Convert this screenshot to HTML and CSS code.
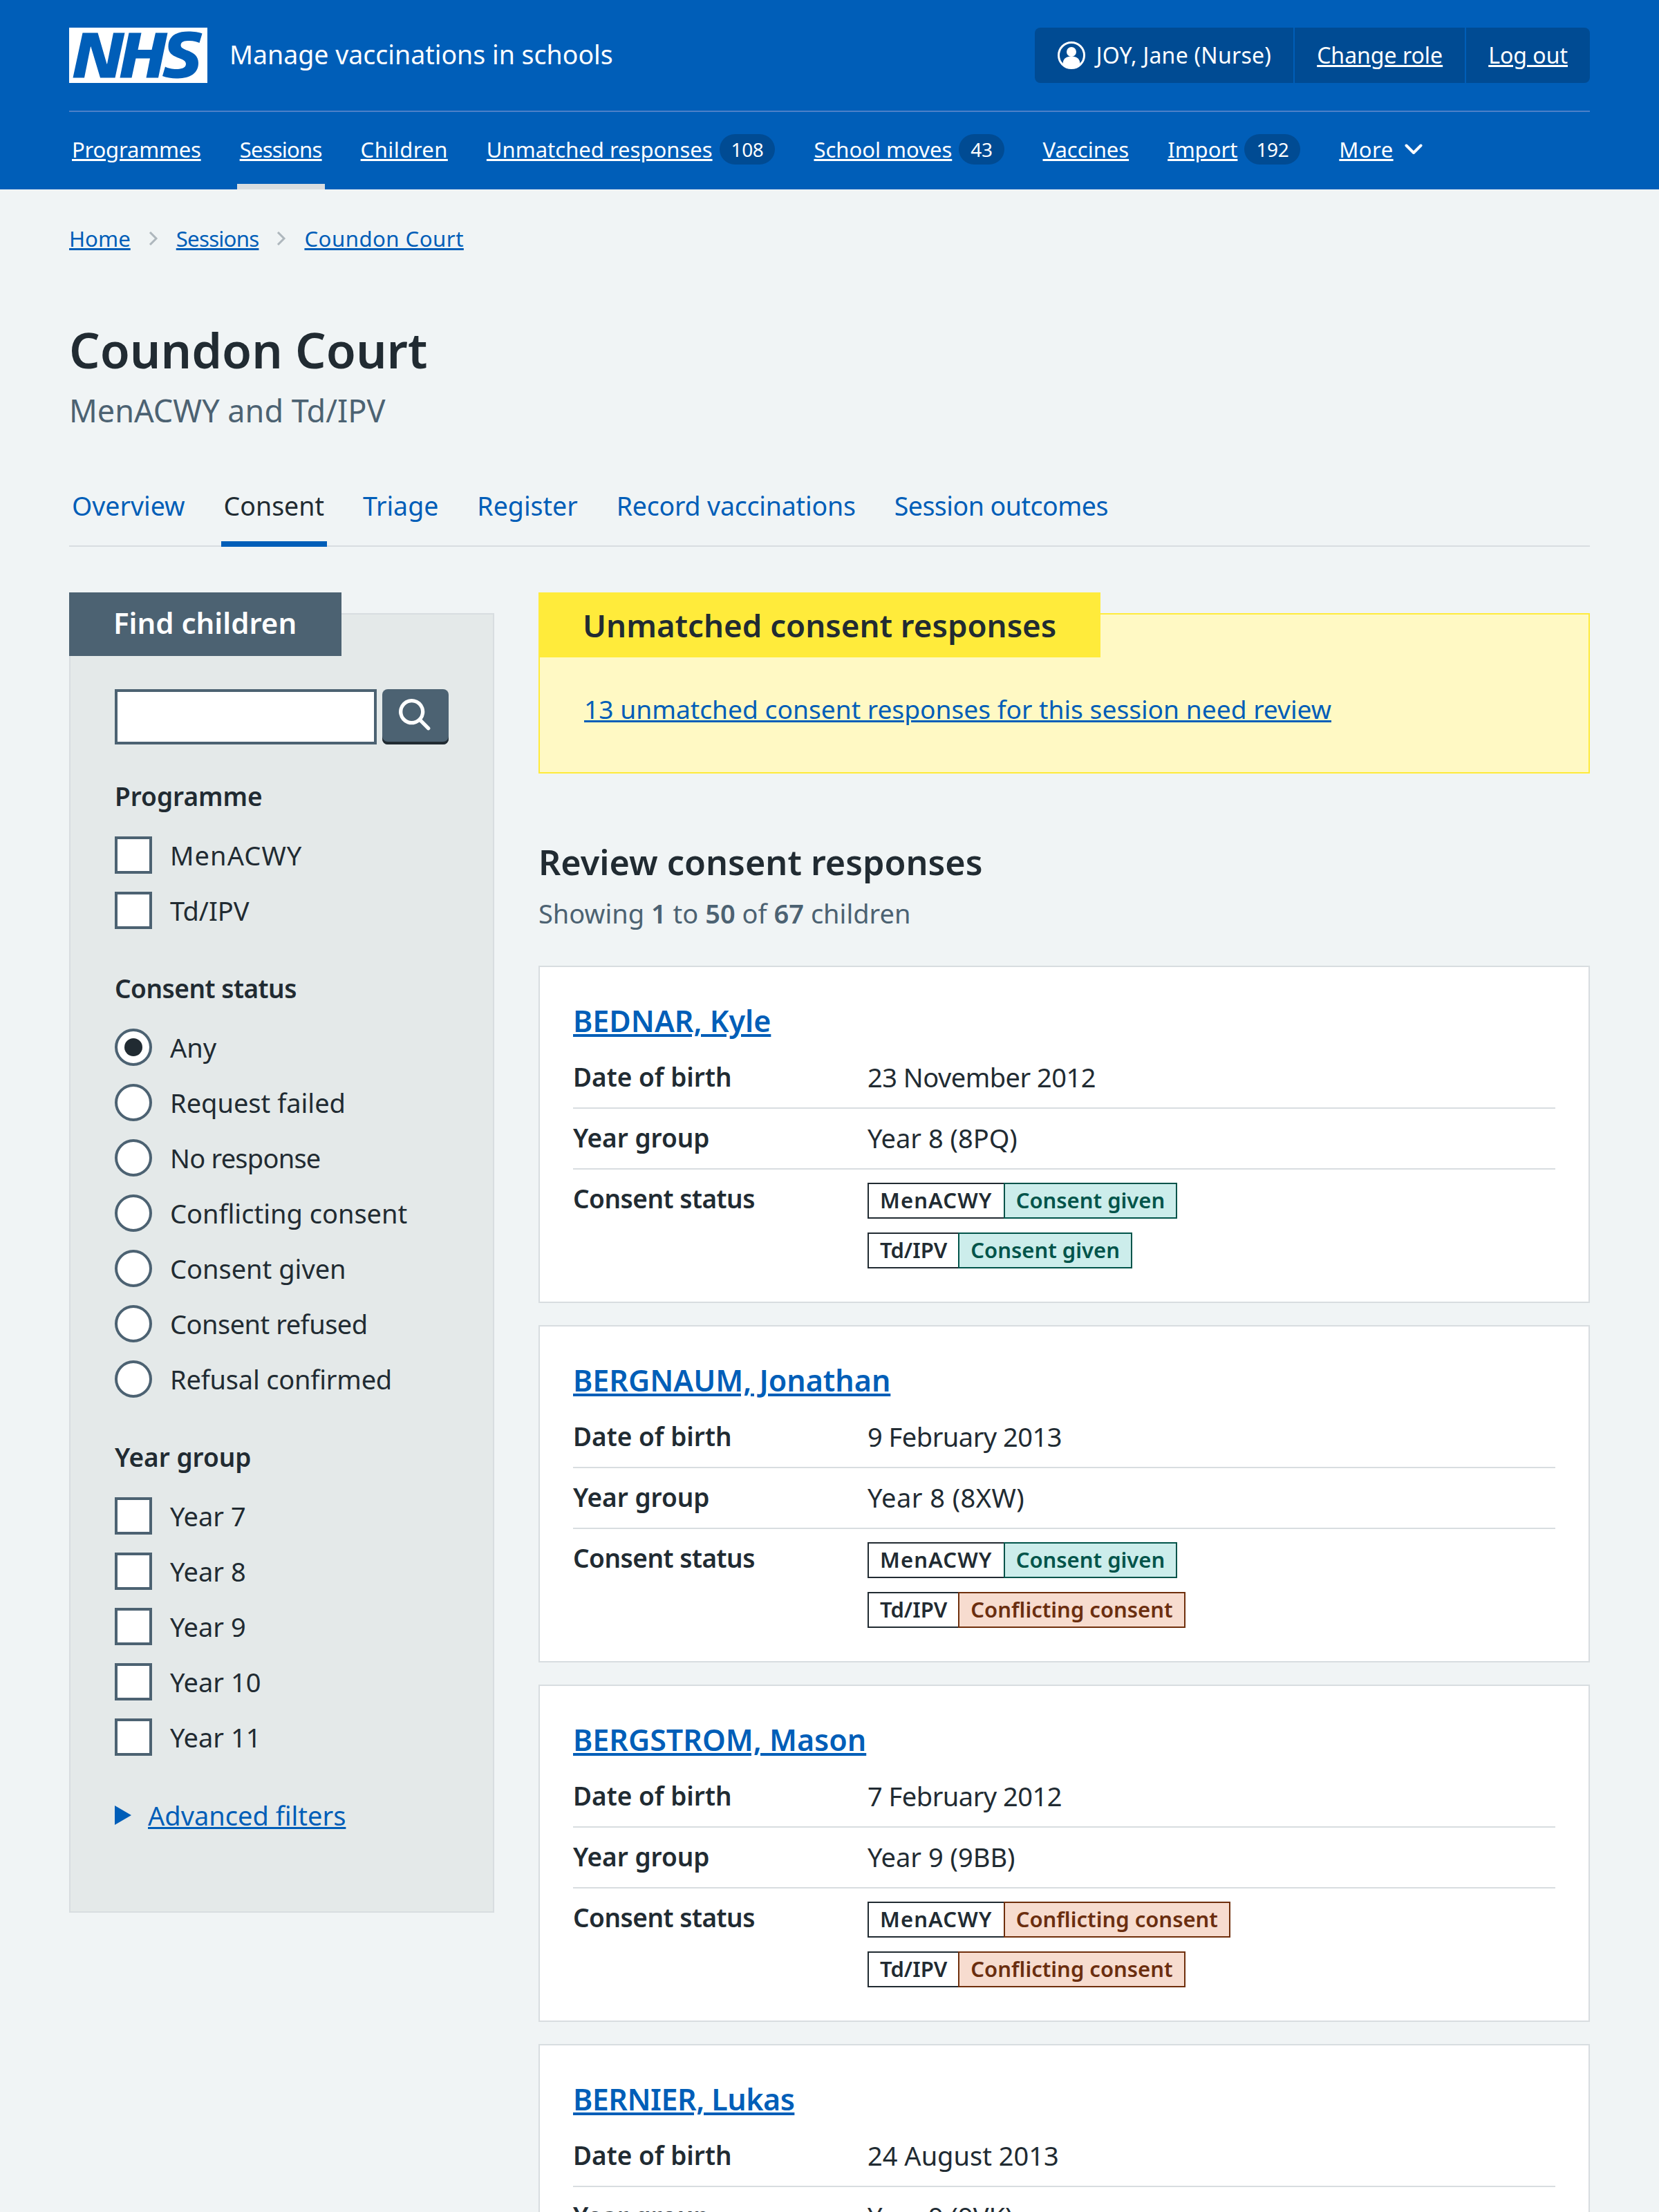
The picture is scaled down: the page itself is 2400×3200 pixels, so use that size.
FILE: index.html
```html
<!DOCTYPE html>
<html lang="en">
<head>
<meta charset="utf-8">
<title>Coundon Court – Manage vaccinations in schools</title>
<link rel="stylesheet" href="styles.css">
</head>
<body>
<header class="header">
  <div class="header-top">
    <a class="logo" href="#"><svg viewBox="0 0 40 16" width="200" height="80"><path fill="#fff" d="M0 0h40v16H0z"/><path fill="#005eb8" d="M3.9 1.5h4.4l2.6 9h.1l1.8-9h3.3l-2.8 13H9l-2.7-9h-.1l-1.8 9H1.1M17.3 1.5h3.6l-1 4.9h4L25 1.5h3.5l-2.7 13h-3.5l1.1-5.6h-4.1l-1.2 5.6h-3.4M37.7 4.4c-.7-.3-1.6-.6-2.9-.6-1.4 0-2.5.2-2.5 1.3 0 1.8 5.1 1.2 5.1 5.1 0 3.6-3.3 4.5-6.4 4.5-1.3 0-2.9-.3-4-.7l.8-2.7c.7.4 2.1.7 3.2.7s2.8-.2 2.8-1.5c0-2.1-5.1-1.3-5.1-5 0-3.4 2.9-4.4 5.8-4.4 1.6 0 3.1.2 4 .6"/></svg></a>
    <span class="service">Manage vaccinations in schools</span>
    <ul class="account">
      <li class="account-item">
        <svg class="account-icon" viewBox="0 0 40 40" width="40" height="40"><circle cx="20" cy="20" r="18.5" fill="none" stroke="#fff" stroke-width="3"/><circle cx="20" cy="15" r="7" fill="#fff"/><path fill="#fff" d="M7.500 33c0-8 5-11.500 12.500-11.500S32.500 25 32.500 33c-3 3-7.500 5-12.500 5s-9.500-2-12.500-5z"/></svg>
        <span class="user-name">JOY, Jane (Nurse)</span>
      </li>
      <li class="account-item"><a href="#">Change role</a></li>
      <li class="account-item"><a href="#">Log out</a></li>
    </ul>
  </div>
  <nav class="nav">
    <a class="nav-item" href="#"><span class="u slim">Programmes</span></a>
    <a class="nav-item active" href="#"><span class="u narrow">Sessions</span></a>
    <a class="nav-item" href="#"><span class="u roomy">Children</span></a>
    <a class="nav-item" href="#"><span class="u">Unmatched responses</span><span class="count">108</span></a>
    <a class="nav-item" href="#"><span class="u">School moves</span><span class="count">43</span></a>
    <a class="nav-item" href="#"><span class="u">Vaccines</span></a>
    <a class="nav-item" href="#"><span class="u">Import</span><span class="count">192</span></a>
    <a class="nav-item" href="#"><span class="u roomy">More</span><svg class="more-icon" viewBox="0 0 26 16" width="26" height="16"><path d="M2.500 2.500L13 13 23.500 2.500" fill="none" stroke="#fff" stroke-width="4" stroke-linecap="round" stroke-linejoin="round"/></svg></a>
  </nav>
</header>
<main class="main">
  <ol class="crumbs">
    <li><a href="#">Home</a></li>
    <li class="sep"><svg viewBox="0 0 14 20" width="14" height="20"><path d="M2 1l9 9-9 9" fill="none" stroke="#aeb7bd" stroke-width="3"/></svg></li>
    <li><a class="narrow" href="#">Sessions</a></li>
    <li class="sep"><svg viewBox="0 0 14 20" width="14" height="20"><path d="M2 1l9 9-9 9" fill="none" stroke="#aeb7bd" stroke-width="3"/></svg></li>
    <li><a class="roomy" href="#">Coundon Court</a></li>
  </ol>
  <h1 class="title">Coundon Court</h1>
  <p class="caption">MenACWY and Td/IPV</p>
  <nav class="tabs">
    <a class="tab" href="#">Overview</a>
    <a class="tab current" href="#">Consent</a>
    <a class="tab" href="#">Triage</a>
    <a class="tab" href="#">Register</a>
    <a class="tab" href="#"><span class="slim">Record vaccinations</span></a>
    <a class="tab" href="#"><span class="tight">Session outcomes</span></a>
  </nav>
  <div class="layout">
    <aside class="filters">
      <h2 class="filters-head">Find children</h2>
      <div class="search">
        <input class="search-input" type="text" aria-label="Search">
        <button class="search-btn" type="button" aria-label="Search"><svg viewBox="0 0 24 24" width="64" height="64"><path fill="#fff" d="M19.710 18.290l-4.110-4.100a7 7 0 1 0-1.410 1.410l4.100 4.110a1 1 0 0 0 1.420 0 1 1 0 0 0 0-1.420zM5 10a5 5 0 1 1 5 5 5 5 0 0 1-5-5z"/></svg></button>
      </div>
      <h3 class="group-head">Programme</h3>
      <ul class="options">
        <li class="option"><span class="box"></span><span class="wide">MenACWY</span></li>
        <li class="option"><span class="box"></span>Td/IPV</li>
      </ul>
      <h3 class="group-head"><span class="tight">Consent status</span></h3>
      <ul class="options">
        <li class="option"><span class="radio checked"></span>Any</li>
        <li class="option"><span class="radio"></span>Request failed</li>
        <li class="option"><span class="radio"></span><span class="narrow">No response</span></li>
        <li class="option"><span class="radio"></span>Conflicting consent</li>
        <li class="option"><span class="radio"></span>Consent given</li>
        <li class="option"><span class="radio"></span><span class="tight">Consent refused</span></li>
        <li class="option"><span class="radio"></span><span class="slim">Refusal confirmed</span></li>
      </ul>
      <h3 class="group-head">Year group</h3>
      <ul class="options">
        <li class="option"><span class="box"></span>Year 7</li>
        <li class="option"><span class="box"></span>Year 8</li>
        <li class="option"><span class="box"></span>Year 9</li>
        <li class="option"><span class="box"></span>Year 10</li>
        <li class="option"><span class="box"></span>Year 11</li>
      </ul>
      <div class="details"><span class="arrow"></span><a href="#">Advanced filters</a></div>
    </aside>
    <section class="results">
      <div class="callout">
        <h2 class="callout-head">Unmatched consent responses</h2>
        <a class="callout-link" href="#">13 unmatched consent responses for this session need review</a>
      </div>
      <h2 class="results-head">Review consent responses</h2>
      <p class="showing">Showing <b>1</b> to <b>50</b> of <b>67</b> children</p>

      <article class="card">
        <a class="name" href="#">BEDNAR, Kyle</a>
        <dl class="rows">
          <div class="row"><dt>Date of birth</dt><dd class="tight">23 November 2012</dd></div>
          <div class="row"><dt>Year group</dt><dd>Year 8 (8PQ)</dd></div>
          <div class="row last"><dt><span class="tight">Consent status</span></dt><dd class="tags">
            <div class="tag-pair"><span class="tag"><span class="wide">MenACWY</span></span><span class="tag given">Consent given</span></div>
            <div class="tag-pair"><span class="tag">Td/IPV</span><span class="tag given">Consent given</span></div>
          </dd></div>
        </dl>
      </article>

      <article class="card">
        <a class="name" href="#">BERGNAUM, Jonathan</a>
        <dl class="rows">
          <div class="row"><dt>Date of birth</dt><dd class="tight">9 February 2013</dd></div>
          <div class="row"><dt>Year group</dt><dd class="roomy">Year 8 (8XW)</dd></div>
          <div class="row last"><dt><span class="tight">Consent status</span></dt><dd class="tags">
            <div class="tag-pair"><span class="tag"><span class="wide">MenACWY</span></span><span class="tag given">Consent given</span></div>
            <div class="tag-pair"><span class="tag">Td/IPV</span><span class="tag conflict">Conflicting consent</span></div>
          </dd></div>
        </dl>
      </article>

      <article class="card">
        <a class="name" href="#">BERGSTROM, Mason</a>
        <dl class="rows">
          <div class="row"><dt>Date of birth</dt><dd class="tight">7 February 2012</dd></div>
          <div class="row"><dt>Year group</dt><dd>Year 9 (9BB)</dd></div>
          <div class="row last"><dt><span class="tight">Consent status</span></dt><dd class="tags">
            <div class="tag-pair"><span class="tag"><span class="wide">MenACWY</span></span><span class="tag conflict">Conflicting consent</span></div>
            <div class="tag-pair"><span class="tag">Td/IPV</span><span class="tag conflict">Conflicting consent</span></div>
          </dd></div>
        </dl>
      </article>

      <article class="card">
        <a class="name" href="#"><span class="tight">BERNIER, Lukas</span></a>
        <dl class="rows">
          <div class="row"><dt>Date of birth</dt><dd>24 August 2013</dd></div>
          <div class="row"><dt>Year group</dt><dd>Year 9 (9VK)</dd></div>
        </dl>
      </article>
    </section>
  </div>
</main>
</body>
</html>
```
FILE: styles.css
```css
* { box-sizing: border-box; }
html, body { margin: 0; padding: 0; }
body {
  height: 3200px;
  overflow: hidden;
  background: #f0f4f5;
  color: #212b32;
  font-family: "Noto Sans", "Open Sans", sans-serif;
  font-size: 38px;
  line-height: 56px;
}
a { color: #005eb8; }
ul, ol, dl, dd, h1, h2, h3, p { margin: 0; padding: 0; list-style: none; }

.narrow { letter-spacing: -.75px; }
.slim { letter-spacing: -.2px; }
.roomy { letter-spacing: .45px; }
.wide { letter-spacing: 1.1px; }
.tight { letter-spacing: -.5px; }

.header { background: #005eb8; height: 274px; padding: 40px 100px 0; color: #fff; }
.header a { color: #fff; }
.header-top { display: flex; align-items: center; height: 120px; padding-bottom: 40px; }
.logo { display: block; height: 80px; }
.logo svg { display: block; }
.service { margin-left: 32px; padding-bottom: 3px; font-size: 37.5px; line-height: 56px; }
.account { display: flex; margin-left: auto; height: 80px; background: #004b93; border-radius: 8px; font-size: 32px; line-height: 48px; }
.account-item { display: flex; align-items: center; padding: 0 32px; border-left: 2px solid #005eb8; }
.account-item:first-child { border-left: 0; padding-left: 33px; }
.account-icon { margin-right: 16px; }
.user-name { letter-spacing: .25px; }
.nav { display: flex; gap: 48px; border-top: 2px solid #4c80c8; height: 114px; font-size: 31px; line-height: 48px; }
.nav-item { display: flex; align-items: center; height: 112px; padding: 4px 4px 0; text-decoration: none; border-bottom: 8px solid transparent; }
.nav-item.active { border-bottom-color: #d8dde0; }
.nav-item .u { text-decoration: underline; }
.count { margin-left: 10px; padding: 0 17px; height: 44px; line-height: 44px; border-radius: 22px; background: #004b93; font-size: 28px; letter-spacing: -.4px; }
.more-icon { margin-left: 16px; }

.main { padding: 0 100px; }
.crumbs { display: flex; align-items: center; margin-top: 47px; font-size: 31.2px; line-height: 48px; }
.sep { display: flex; margin: 0 26px; }
.title { margin-top: 97px; font-size: 70px; line-height: 80px; font-weight: 600; }
.caption { margin-top: 20px; font-size: 45px; line-height: 56px; color: #4c6272; }
.tabs { display: flex; gap: 48px; margin-top: 72px; height: 97px; border-bottom: 2px solid #d8dde0; }
.tab { display: block; padding: 10px 4px 0; height: 97px; font-size: 37.500px; line-height: 56px; text-decoration: none; border-bottom: 8px solid transparent; margin-bottom: -2px; }
.tab.current { color: #212b32; border-bottom-color: #005eb8; }

.layout { display: grid; grid-template-columns: 615px 1521px; column-gap: 64px; margin-top: 66px; align-items: start; }
.filters { margin-top: 30px; padding: 0 64px 111px; background: #e4e9e9; border: 2px solid #d8dde0; }
.filters-head { margin: -32px 0 0 -66px; width: 394px; height: 92px; padding-left: 64px; background: #4c6272; color: #fff; font-size: 42px; line-height: 88px; font-weight: 600; }
.search { display: flex; gap: 8px; margin-top: 48px; height: 80px; }
.search-input { width: 379px; height: 80px; border: 4px solid #4c6272; border-radius: 0; background: #fff; padding: 0; }
.search-btn { display: flex; align-items: center; justify-content: center; width: 96px; height: 80px; padding: 0 0 4px; border: 0; border-radius: 8px; background: #4c6272; box-shadow: inset 0 -4px 0 #212b32; }
.group-head { margin-top: 49px; font-size: 37px; line-height: 48px; font-weight: 600; }
.search + .group-head { margin-top: 51px; }
.options { margin-top: 21px; }
.option { display: flex; align-items: center; height: 80px; }
.box { width: 54px; height: 54px; margin-right: 26px; background: #fff; border: 4px solid #4c6272; }
.radio { position: relative; width: 54px; height: 54px; margin-right: 26px; background: #fff; border: 4px solid #4c6272; border-radius: 50%; }
.radio.checked::after { content: ""; position: absolute; inset: 10px; border-radius: 50%; background: #212b32; }
.details { display: flex; align-items: center; margin-top: 45px; }
.arrow { width: 0; height: 0; margin-right: 24px; border-left: 24px solid #005eb8; border-top: 14px solid transparent; border-bottom: 14px solid transparent; }

.callout { margin-top: 30px; height: 232px; background: #fff9c4; border: 2px solid #ffeb3b; }
.callout-head { margin: -32px 0 0 -2px; width: 813px; height: 94px; padding-left: 64px; background: #ffeb3b; font-size: 45.6px; line-height: 94px; font-weight: 600; }
.callout-link { display: inline-block; margin: 47px 0 0 64px; font-size: 37.200px; line-height: 56px; }
.results-head { margin-top: 96px; font-size: 50.3px; line-height: 64px; font-weight: 600; }
.showing { margin-top: 14px; color: #4c6272; line-height: 56px; }
.showing b { font-weight: 600; }

.card { margin-top: 32px; height: 488px; padding: 48px 48px 48px; background: #fff; border: 2px solid #d8dde0; }
.showing + .card { margin-top: 48px; }
.name { display: block; font-size: 43px; line-height: 60px; font-weight: 600; }
.rows { margin-top: 9px; }
.row { display: flex; padding: 14px 0 16px; border-bottom: 2px solid #d8dde0; }
.row.last { border-bottom: 0; padding-bottom: 0; }
.row dt { width: 426px; font-size: 37px; font-weight: 600; letter-spacing: 0; }
.tags { display: flex; flex-direction: column; gap: 20px; align-items: flex-start; padding-top: 5px; }
.tag-pair { display: flex; }
.tag { height: 52px; padding: 0 16px; border: 2px solid #212b32; background: #fff; font-size: 31px; line-height: 46px; font-weight: 600; }
.tag + .tag { margin-left: -2px; }
.tag.given { background: #ccedeb; border-color: #00544a; color: #00544a; }
.tag.conflict { background: #f7dccf; border-color: #6f2f0c; color: #6b2e0f; }
```
